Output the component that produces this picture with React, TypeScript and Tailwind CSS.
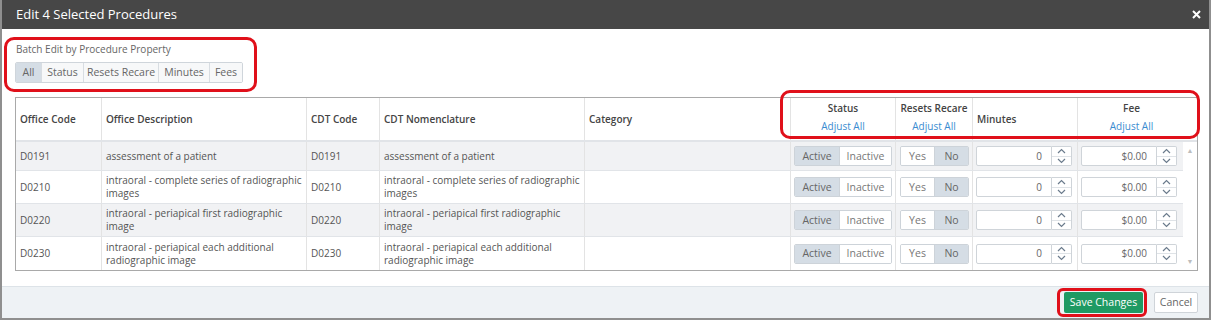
import React from "react";

const font = { fontFamily: '"Open Sans", "Noto Sans", sans-serif' };

const rows = [
  { code: "D0191", desc: "assessment of a patient", stripe: true },
  { code: "D0210", desc: "intraoral - complete series of radiographic images", stripe: false },
  { code: "D0220", desc: "intraoral - periapical first radiographic image", stripe: true },
  { code: "D0230", desc: "intraoral - periapical each additional radiographic image", stripe: false },
];

function Chevron({ up }: { up?: boolean }) {
  return (
    <svg width="9" height="6" viewBox="0 0 9 6" className="block">
      <path
        d={up ? "M1 5 L4.5 1.5 L8 5" : "M1 1 L4.5 4.5 L8 1"}
        fill="none"
        stroke="#6b7b8c"
        strokeWidth="1.2"
      />
    </svg>
  );
}

function NumberInput({ value }: { value: string }) {
  return (
    <div className="flex h-[20px] w-[96px]">
      <div className="flex h-full w-[76px] items-center justify-end rounded-l-[2px] border border-[#cfd4d9] bg-white pr-[9px] text-[#666]">
        {value}
      </div>
      <div className="flex h-full w-[20px] flex-col rounded-r-[2px] border border-l-0 border-[#cfd4d9] bg-white">
        <div className="flex flex-1 items-center justify-center border-b border-[#dfe3e7]">
          <Chevron up />
        </div>
        <div className="flex flex-1 items-center justify-center">
          <Chevron />
        </div>
      </div>
    </div>
  );
}

function Toggle({ left, right, leftActive, widths }: { left: string; right: string; leftActive: boolean; widths: [number, number] }) {
  const on = "bg-[#d5dde5] text-[#666]";
  const off = "bg-white text-[#777]";
  return (
    <div className="flex h-[20px] overflow-hidden rounded-[2px] border border-[#cdd3d9] text-[10.5px]">
      <div
        className={`flex items-center justify-center border-r border-[#cdd3d9] ${leftActive ? on : off}`}
        style={{ width: widths[0] }}
      >
        {left}
      </div>
      <div className={`flex items-center justify-center ${leftActive ? off : on}`} style={{ width: widths[1] }}>
        {right}
      </div>
    </div>
  );
}

const cols = "grid grid-cols-[85px_205px_73px_205px_206px_105px_77px_105px_106px]";

export default function App() {
  return (
    <div className="relative h-[320px] w-[1211px] overflow-hidden bg-white" style={font}>
      <div className="flex h-[320px] flex-col border-x-2 border-b-2 border-[#8f8f8f]">
        {/* title bar */}
        <div className="flex h-[29px] shrink-0 items-center justify-between bg-[#474747] pl-[14px] pr-[8px]">
          <span className="text-[13px] font-normal text-white">Edit 4 Selected Procedures</span>
          <svg width="9" height="9" viewBox="0 0 9 9">
            <path d="M1 1 L8 8 M8 1 L1 8" stroke="white" strokeWidth="2" />
          </svg>
        </div>

        {/* body */}
        <div className="flex flex-1 flex-col px-[13px] pt-[13px]">
          <div className="pl-[1px] text-[10px] leading-[14px] text-[#666]">Batch Edit by Procedure Property</div>
          <div className="mt-[6px] flex h-[21px] w-fit overflow-hidden rounded-[2px] border border-[#cfd5db] text-[10.5px] text-[#666]">
            <div className="flex w-[25px] items-center justify-center bg-[#d5dde5]">All</div>
            <div className="flex w-[42px] items-center justify-center border-l border-[#d8dde2] bg-[#f7f8f9]">Status</div>
            <div className="flex w-[75px] items-center justify-center border-l border-[#d8dde2] bg-[#f7f8f9]">Resets Recare</div>
            <div className="flex w-[51px] items-center justify-center border-l border-[#d8dde2] bg-[#f7f8f9]">Minutes</div>
            <div className="flex w-[33px] items-center justify-center border-l border-[#d8dde2] bg-[#f7f8f9]">Fees</div>
          </div>

          {/* table */}
          <div className="mt-[14px] w-[1183px] border border-[#a9a9a9] text-[10px] text-[#555]">
            {/* header */}
            <div className="grid h-[44px] grid-cols-[85px_205px_73px_205px_206px_105px_77px_105px_120px] border-b-2 border-[#e1e4e8] font-semibold leading-[13px] text-[#444]">
              <div className="flex items-center px-[4px]">Office Code</div>
              <div className="flex items-center border-l border-[#e3e3e3] px-[4px]">Office Description</div>
              <div className="flex items-center border-l border-[#e3e3e3] px-[4px]">CDT Code</div>
              <div className="flex items-center border-l border-[#e3e3e3] px-[4px]">CDT Nomenclature</div>
              <div className="flex items-center border-l border-[#e3e3e3] px-[4px]">Category</div>
              <div className="flex flex-col items-center gap-[5px] border-l border-[#e3e3e3] pt-[4px]">
                <span>Status</span>
                <span className="font-normal text-[#3a8bd0]">Adjust All</span>
              </div>
              <div className="flex flex-col items-center gap-[5px] border-l border-[#e3e3e3] pt-[4px]">
                <span>Resets Recare</span>
                <span className="font-normal text-[#3a8bd0]">Adjust All</span>
              </div>
              <div className="flex items-center border-l border-[#e3e3e3] px-[4px]">Minutes</div>
              <div className="flex flex-col items-center gap-[5px] border-l border-[#e3e3e3] pr-[12px] pt-[4px]">
                <span>Fee</span>
                <span className="font-normal text-[#3a8bd0]">Adjust All</span>
              </div>
            </div>

            {/* body rows + scrollbar */}
            <div className="flex">
              <div className="flex w-[1167px] flex-col">
                {rows.map((r, i) => (
                  <div
                    key={r.code}
                    className={`${cols} ${i === 0 ? "h-[29px]" : "h-[33px]"} ${i < rows.length - 1 ? "border-b border-[#e1e4e8]" : ""} ${r.stripe ? "bg-[#f1f2f4]" : "bg-white"} leading-[13px]`}
                  >
                    <div className="flex items-center px-[4px]">{r.code}</div>
                    <div className="flex items-center border-l border-[#e3e3e3] px-[4px]">{r.desc}</div>
                    <div className="flex items-center border-l border-[#e3e3e3] px-[4px]">{r.code}</div>
                    <div className="flex items-center border-l border-[#e3e3e3] px-[4px]">{r.desc}</div>
                    <div className="border-l border-[#e3e3e3]"></div>
                    <div className="flex items-center border-l border-[#e3e3e3] pl-[3px]">
                      <Toggle left="Active" right="Inactive" leftActive widths={[45, 51]} />
                    </div>
                    <div className="flex items-center border-l border-[#e3e3e3] pl-[4px]">
                      <Toggle left="Yes" right="No" leftActive={false} widths={[34, 33]} />
                    </div>
                    <div className="flex items-center border-l border-[#e3e3e3] pl-[3px]">
                      <NumberInput value="0" />
                    </div>
                    <div className="flex items-center border-l border-[#e3e3e3] pl-[3px]">
                      <NumberInput value="$0.00" />
                    </div>
                  </div>
                ))}
              </div>
              <div className="flex w-[14px] flex-col items-center justify-between py-[5px] text-[7px] leading-none text-[#bdbdbd]">
                <span>▲</span>
                <span>▼</span>
              </div>
            </div>
          </div>
        </div>

        {/* footer */}
        <div className="flex h-[32px] shrink-0 items-center justify-end gap-[11px] border-t border-[#dde3e8] bg-[#eef2f5] pr-[11px]">
          <button className="h-[21px] w-[79px] rounded-[2px] bg-[#1f9a63] text-[10.5px] text-white">Save Changes</button>
          <button className="h-[21px] w-[44px] rounded-[2px] border border-[#cfd4d9] bg-white text-[10.5px] text-[#666]">Cancel</button>
        </div>
      </div>

      {/* red annotation boxes */}
      <div className="pointer-events-none absolute left-[4px] top-[37px] h-[55px] w-[253px] rounded-[10px] border-[3px] border-[#e0101a]"></div>
      <div className="pointer-events-none absolute left-[780px] top-[90px] h-[49px] w-[420px] rounded-[10px] border-[3px] border-[#e0101a]"></div>
      <div className="pointer-events-none absolute left-[1057px] top-[288px] h-[29px] w-[90px] rounded-[6px] border-[3px] border-[#e0101a]"></div>
    </div>
  );
}
